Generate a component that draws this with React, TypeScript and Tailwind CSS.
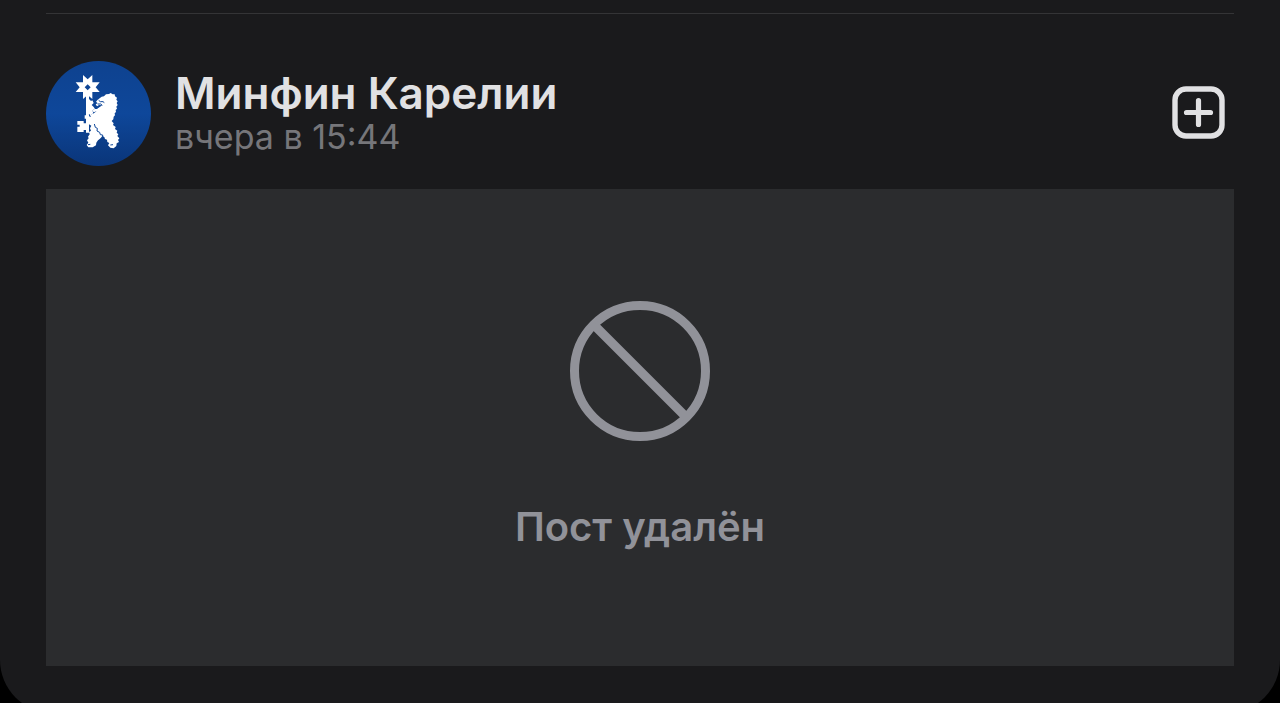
function Avatar() {
  return (
    <svg viewBox="18 17 315 315" className="size-[105px] shrink-0" role="img" aria-label="Минфин Карелии">
      <defs>
        <linearGradient id="avatar-bg" x1="0" y1="0" x2="0" y2="1">
          <stop offset="0" stopColor="#0e428f" />
          <stop offset="0.5" stopColor="#0e479a" />
          <stop offset="1" stopColor="#0a3579" />
        </linearGradient>
      </defs>
      <circle cx="175.5" cy="174.5" r="157.5" fill="url(#avatar-bg)" />
      <g fill="#fff">
        {/* star on top of the key */}
        <path
          fillRule="evenodd"
          d="M129 59L143 72L157 59V81H179L167 96L179 110H157V131L143 119L129 131V110H107L119 96L107 81H129ZM143 87L134 96L143 105L152 96Z"
        />
        {/* key */}
        <path d="M138 118H147V232H138V224H131V230H112V214H119V208H112V197H131V204H138V190H134V180H138Z" />
        {/* bear */}
        <path d="M173 133L185 124L192 123L198 117L207 116L212 113L218 117L224 117L225 123L231 127L229 133L233 138L230 143L233 149L229 154L231 160L227 164L228 170L224 174L225 180L221 184L220 192L215 197L221 204L219 209L227 215L225 221L232 226L230 232L235 237L232 242L238 249L234 254L237 260L230 264L229 272L221 279L211 277L204 270L208 263L202 260L201 253L195 251L193 245L187 242L183 247L178 252L174 255L169 262L168 270L158 276L145 276L140 269L145 262L141 255L146 249L144 244L149 237L147 230L153 226L150 219L154 211L147 207L146 184L152 178L162 174L170 167L162 171L156 166L164 161L171 161L179 155L187 150L177 149L171 153L167 147L173 144L168 139Z" />
        <path d="M147 131L153 137L157 135L161 143L155 149L161 155L165 161L157 165L160 174L151 180L147 176Z" />
      </g>
      <g fill="none" stroke="#0e479a" strokeWidth="3">
        <path d="M176 135L181 139L189 139L193 142M173 146L182 146L187 150M163 206L166 216L172 219L171 227L179 231L181 238L188 239L188 247" />
        <path d="M148 178L151 185M144 268L151 267M211 269L219 268" />
      </g>
    </svg>
  )
}

function AddIcon() {
  return (
    <svg viewBox="0 0 54 54" className="size-[54px]" fill="none" stroke="#e1e1e3" aria-hidden="true">
      <rect x="3" y="3" width="47" height="47" rx="11" strokeWidth="5.4" />
      <path d="M26.5 14.5V38.5M14.5 26.5H38.5" strokeWidth="5.2" strokeLinecap="round" />
    </svg>
  )
}

function BlockedIcon() {
  return (
    <svg viewBox="0 0 140 140" className="size-[140px]" fill="none" stroke="#919299" strokeWidth="9" aria-hidden="true">
      <circle cx="70" cy="70" r="65.5" />
      <path d="M24 24L116 116" />
    </svg>
  )
}

export default function App() {
  return (
    <main className="h-screen overflow-hidden bg-black font-['Inter','Liberation_Sans',sans-serif]">
      <article className="rounded-b-[53px] bg-[#1a1a1c] px-[46px] pt-[13px] pb-[47px]">
        <header className="flex items-center border-t border-[#343436] pt-[47px] pb-[23px]">
          <Avatar />
          <div className="ml-6 min-w-0 flex-1 pt-0.5">
            <h1 className="text-[44px] leading-[44px] font-semibold text-[#e1e1e3]">Минфин Карелии</h1>
            <time className="block text-[34px] leading-[44px] text-[#76767a]">вчера в 15:44</time>
          </div>
          <button type="button" aria-label="Подписаться" className="mr-2 shrink-0 pb-0.5">
            <AddIcon />
          </button>
        </header>
        <section className="flex flex-col items-center bg-[#2b2c2e] pt-28 pb-[115px]">
          <BlockedIcon />
          <p className="mt-[62px] text-[40px] leading-[48px] font-semibold text-[#919299]">Пост удалён</p>
        </section>
      </article>
    </main>
  )
}
